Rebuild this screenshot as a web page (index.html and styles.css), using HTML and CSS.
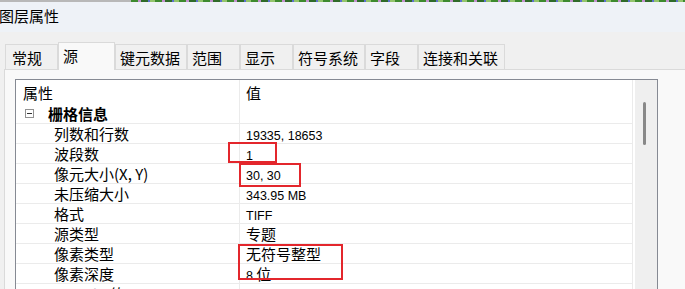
FILE: index.html
```html
<!DOCTYPE html>
<html>
<head>
    <title>图层属性</title>
    <link rel="stylesheet" href="styles.css">
</head>
<body>
    <div class="strip">
        <div class="strip-gray"></div>
        <div class="strip-color"></div>
    </div>
    <div class="titlebar">图层属性</div>

    <div class="tabbar">
        <div class="tab">常规</div>
        <div class="tab active">源</div>
        <div class="tab">键元数据</div>
        <div class="tab">范围</div>
        <div class="tab">显示</div>
        <div class="tab">符号系统</div>
        <div class="tab">字段</div>
        <div class="tab">连接和关联</div>
    </div>

    <div class="panel">
        <div class="list">
            <div class="grid">
                <div class="row head">
                    <div class="c1">属性</div>
                    <div class="c2">值</div>
                </div>
                <div class="row group">
                    <div class="c1"><span class="expander"></span>栅格信息</div>
                    <div class="c2"></div>
                </div>
                <div class="row">
                    <div class="c1">列数和行数</div>
                    <div class="c2"><span class="num">19335, 18653</span></div>
                </div>
                <div class="row">
                    <div class="c1">波段数</div>
                    <div class="c2"><span class="num">1</span></div>
                </div>
                <div class="row">
                    <div class="c1">像元大小(X, Y)</div>
                    <div class="c2"><span class="num">30, 30</span></div>
                </div>
                <div class="row">
                    <div class="c1">未压缩大小</div>
                    <div class="c2"><span class="num">343.95 MB</span></div>
                </div>
                <div class="row">
                    <div class="c1">格式</div>
                    <div class="c2"><span class="num">TIFF</span></div>
                </div>
                <div class="row">
                    <div class="c1">源类型</div>
                    <div class="c2">专题</div>
                </div>
                <div class="row">
                    <div class="c1">像素类型</div>
                    <div class="c2">无符号整型</div>
                </div>
                <div class="row">
                    <div class="c1">像素深度</div>
                    <div class="c2"><span class="num">8</span> 位</div>
                </div>
                <div class="row">
                    <div class="c1">NoData 值</div>
                    <div class="c2"></div>
                </div>
            </div>
            <div class="scroll">
                <div class="thumb"></div>
            </div>
        </div>
    </div>

    <!-- red annotation boxes -->
    <div class="mark mark-bands"></div>
    <div class="mark mark-cell"></div>
    <div class="mark mark-pixel"></div>
</body>
</html>
```

FILE: styles.css
```css
* {
    box-sizing: border-box;
    margin: 0;
    padding: 0;
}

body {
    position: relative;
    width: 685px;
    height: 289px;
    overflow: hidden;
    background: #f0f0f0;
    font-family: "Noto Sans CJK SC", sans-serif;
    font-size: 15px;
    color: #000;
}

.strip {
    display: flex;
    height: 2px;
}

.strip-gray {
    width: 131px;
    background: #b8b8b8;
}

.strip-color {
    flex: 1;
    background: repeating-linear-gradient(90deg,
        #3d8a2e 0 7px,
        #c391cf 7px 10px,
        #2f6b28 10px 17px,
        #5a6fd0 17px 19px,
        #93c46c 19px 24px);
}

.titlebar {
    height: 30px;
    line-height: 27px;
    background: #eef2f7;
    text-indent: -1px;
}

.tabbar {
    display: flex;
    align-items: flex-end;
    height: 37px;
    padding-left: 5px;
}

.tab {
    height: 25px;
    min-width: 53px;
    padding: 0 6px 0 4px;
    line-height: 26px;
    border: 1px solid #dadada;
    border-bottom: none;
    background: #f0f0f0;
    white-space: nowrap;
}

.tab:first-child {
    padding-left: 6px;
}

.tab.active {
    position: relative;
    height: 28px;
    min-width: 57px;
    margin-bottom: -1px;
    line-height: 25px;
    background: #f9f9f9;
}

.panel {
    height: 220px;
    margin-left: 4px;
    padding: 9px 0 0 10px;
    background: #f9f9f9;
    border-top: 1px solid #dadada;
    border-left: 1px solid #dadada;
}

.list {
    display: flex;
    width: 643px;
    height: 230px;
    background: #fff;
    border: 1px solid #868a93;
}

.grid {
    width: 617px;
    border-right: 1px solid #ebebeb;
}

.row {
    display: flex;
    height: 20px;
    line-height: 19px;
    border-bottom: 1px solid #ebebeb;
}

.row.head {
    height: 24px;
    line-height: 25px;
    border-bottom: none;
}

.c1 {
    width: 224px;
    padding-left: 38px;
    border-right: 1px solid #ebebeb;
    white-space: nowrap;
}

.c2 {
    flex: 1;
    padding-left: 6px;
    white-space: nowrap;
}

.head .c1 {
    padding-left: 7px;
}

.group .c1 {
    display: flex;
    align-items: center;
    padding-left: 9px;
    font-weight: bold;
}

.expander {
    position: relative;
    width: 9px;
    height: 9px;
    margin-right: 14px;
    border: 1px solid #929292;
}

.expander::after {
    content: "";
    position: absolute;
    left: 1px;
    top: 3px;
    width: 5px;
    height: 1px;
    background: #333;
}

.num {
    font-family: "Liberation Sans", sans-serif;
    font-size: 12.5px;
}

.scroll {
    width: 22px;
    margin-left: 2px;
    padding: 22px 0 0 8px;
    background: #efefef;
}

.thumb {
    width: 3px;
    height: 43px;
    border-radius: 2px;
    background: #888;
}

.mark {
    position: absolute;
    border: 2px solid #e3262c;
}

.mark-bands {
    left: 228px;
    top: 142px;
    width: 49px;
    height: 21px;
}

.mark-cell {
    left: 239px;
    top: 163px;
    width: 62px;
    height: 24px;
}

.mark-pixel {
    left: 238px;
    top: 244px;
    width: 105px;
    height: 36px;
}
```
